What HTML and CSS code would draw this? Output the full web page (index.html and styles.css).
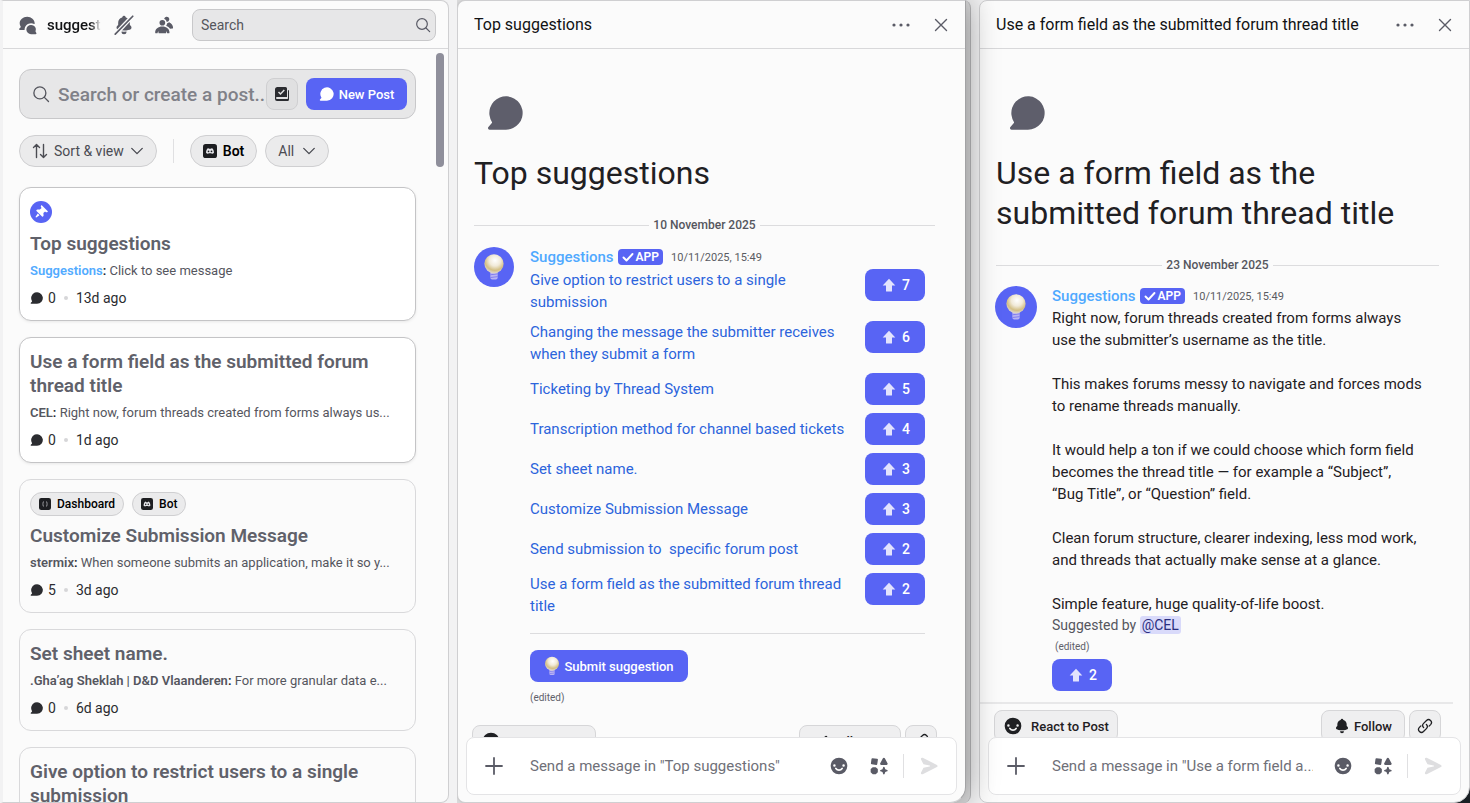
FILE: index.html
```
<!DOCTYPE html>
<html lang="en">
<head>
  <meta charset="UTF-8" />
  <meta name="viewport" content="width=device-width, initial-scale=1.0"/>
  <title>suggestions</title>
  <link rel="stylesheet" href="styles.css">
</head>
<body>

  <!-- Shared icons -->
  <svg class="sprite" aria-hidden="true">
    <defs>
      <radialGradient id="glass" cx="0.55" cy="0.32" r="0.65">
        <stop offset="0" stop-color="#ffffff"/>
        <stop offset="0.45" stop-color="#f1ead9"/>
        <stop offset="0.8" stop-color="#d3bf84"/>
        <stop offset="1" stop-color="#dcd3c9"/>
      </radialGradient>
      <symbol id="i-bubble" viewBox="0 0 24 24">
        <path d="M12 22a10 10 0 1 0-8.45-4.64c.13.19.11.44-.04.61l-2.06 2.37A1 1 0 0 0 2.2 22H12Z"/>
      </symbol>
      <symbol id="i-forum" viewBox="0 0 24 24">
        <path d="M18.91 12.98a5.45 5.45 0 0 1 2.18 6.2c-.1.33-.09.68.1.96l.83 1.32a1 1 0 0 1-.84 1.54h-5.5A5.6 5.6 0 0 1 10 17.5a5.6 5.6 0 0 1 5.68-5.5c1.2 0 2.32.36 3.23.98Z"/>
        <path d="M19.24 10.86c.32.16.72-.02.74-.38L20 10c0-4.42-4.03-8-9-8s-9 3.58-9 8c0 1.5.47 2.91 1.28 4.11.14.21.12.49-.06.67l-1.51 1.51A1 1 0 0 0 2.4 18h5.1a.5.5 0 0 0 .49-.5c0-4.2 3.5-7.5 7.68-7.5 1.28 0 2.5.3 3.56.86Z"/>
      </symbol>
      <symbol id="i-bell" viewBox="0 0 24 24">
        <path d="M9.7 2.89c.18-.07.32-.24.37-.43a2 2 0 0 1 3.86 0c.05.2.19.36.38.43A7 7 0 0 1 19 9.5v2.09c0 .12.05.24.13.33l1.1 1.22a3 3 0 0 1 .77 2.01v.28c0 .67-.34 1.29-.95 1.56-1.31.6-4 1.51-8.05 1.51-4.05 0-6.74-.91-8.05-1.5-.61-.28-.95-.9-.95-1.57v-.28a3 3 0 0 1 .77-2l1.1-1.23a.5.5 0 0 0 .13-.33V9.5a7 7 0 0 1 4.7-6.61ZM9.18 19.84A.16.16 0 0 0 9 20a3 3 0 1 0 6 0c0-.1-.09-.17-.18-.16a24.86 24.86 0 0 1-5.64 0Z"/>
      </symbol>
      <symbol id="i-people" viewBox="0 0 24 24">
        <circle cx="10" cy="9.300" r="3.400"/>
        <path d="M10 13.700c-5 0-8.600 3-8.600 7.300 0 .7.4 1 1.100 1h1.700l.8-2.700.6 2.700h8.800l.6-2.700.8 2.700h1.700c.7 0 1.100-.3 1.100-1 0-4.300-3.600-7.300-8.600-7.300Z"/>
        <path d="M12.600 3.600a3.100 3.100 0 1 1 4.700 3.900l-1.900.9a5.600 5.600 0 0 0-3.200-3.900Z"/>
        <path d="M15.600 10.200 18.200 8.700c2.700 1.300 4.600 3.500 4.700 6.500 0 .7-.4 1.100-1.100 1.100l-2.400.2a11 11 0 0 0-4.800-3.700c.6-.7.9-1.700 1-2.600Z"/>
      </symbol>
      <symbol id="i-search" viewBox="0 0 24 24">
        <g fill="none" stroke="currentColor" stroke-width="1.800" stroke-linecap="round">
          <circle cx="10.500" cy="10.500" r="8"/><path d="m16.500 16.500 5.500 5.500"/>
        </g>
      </symbol>
      <symbol id="i-chevron" viewBox="0 0 16 16">
        <path d="m2 5 6 6 6-6" fill="none" stroke="currentColor" stroke-width="1.600" stroke-linecap="round" stroke-linejoin="round"/>
      </symbol>
      <symbol id="i-close" viewBox="0 0 16 16">
        <path d="m2.500 2.500 11 11m0-11-11 11" fill="none" stroke="currentColor" stroke-width="1.400" stroke-linecap="round"/>
      </symbol>
      <symbol id="i-dots" viewBox="0 0 20 20">
        <circle cx="3" cy="10" r="1.600"/><circle cx="10" cy="10" r="1.600"/><circle cx="17" cy="10" r="1.600"/>
      </symbol>
      <symbol id="i-plus" viewBox="0 0 20 20">
        <path d="M10 2v16M2 10h16" fill="none" stroke="currentColor" stroke-width="1.800" stroke-linecap="round"/>
      </symbol>
      <symbol id="i-smile" viewBox="0 0 24 24">
        <path fill-rule="evenodd" d="M12 22a10 10 0 1 0 0-20 10 10 0 0 0 0 20ZM6.500 13a1.500 1.500 0 1 0 0-3 1.500 1.500 0 0 0 0 3Zm11 0a1.500 1.500 0 1 0 0-3 1.500 1.500 0 0 0 0 3Zm-9.800 1.170a1 1 0 0 1 1.390.27 3.500 3.500 0 0 0 5.820 0 1 1 0 0 1 1.660 1.120 5.500 5.500 0 0 1-9.140 0 1 1 0 0 1 .27-1.400Z"/>
      </symbol>
      <symbol id="i-apps" viewBox="0 0 24 24">
        <path d="M4.200 2.600 9.700 3.300a1.100 1.100 0 0 1 1 1.200l-.8 5.200a1.100 1.100 0 0 1-1.200 1l-5.400-.7a1.100 1.100 0 0 1-1-1.300l.7-5.100a1.100 1.100 0 0 1 1.200-1Z"/>
        <path d="M16.700 2.800a1.300 1.300 0 0 1 2.300 0l3.200 5.900a1.300 1.300 0 0 1-1.100 2h-6.500a1.300 1.300 0 0 1-1.100-2Z"/>
        <path d="M4.500 13.400h3.600l2.500 2.300v3.800L8.100 21.900H4.500L2 19.500v-3.800Z"/>
        <path d="M17 13.600c.3-.8 1.400-.8 1.700 0l.8 2.300 2.300.8c.8.3.8 1.400 0 1.700l-2.300.8-.8 2.300c-.3.8-1.400.8-1.700 0l-.8-2.300-2.300-.8c-.8-.3-.8-1.400 0-1.700l2.300-.8Z"/>
      </symbol>
      <symbol id="i-send" viewBox="0 0 24 24">
        <path d="M6.600 10.020 14 11.400a.6.6 0 0 1 0 1.180L6.600 14l-2.940 5.870a1.480 1.480 0 0 0 1.990 1.980l17.030-8.520a1.480 1.480 0 0 0 0-2.640L5.650 2.160a1.480 1.480 0 0 0-1.990 1.980l2.940 5.880Z"/>
      </symbol>
      <symbol id="i-bulb" viewBox="0 0 24 30">
        <path d="M8 21h8v5.500a2 2 0 0 1-2 2h-4a2 2 0 0 1-2-2Z" fill="#b9b4f4"/>
        <path d="m8 23.500 8-1m-8 4 8-1" stroke="#7d78ef" stroke-width="1"/>
        <circle cx="12" cy="11.500" r="10.500" fill="url(#glass)"/>
      </symbol>
      <symbol id="i-up" viewBox="0 0 14 14">
        <path d="M7 .8 13.300 7.400H10V13a.5.5 0 0 1-.5.5h-5A.5.5 0 0 1 4 13V7.400H.7Z"/>
      </symbol>
      <symbol id="i-face" viewBox="0 0 16 16">
        <rect width="16" height="16" rx="3" fill="#1d1e21"/>
        <path fill="#e6e6ea" fill-rule="evenodd" d="M6.400 4.800 5 5.200c-1 1.400-1.600 3.300-1.500 5.200.8.6 1.600.9 2.300 1l.5-.9h3.400l.5.9c.7-.1 1.500-.4 2.300-1 .1-1.900-.5-3.800-1.500-5.200l-1.400-.4-.4.700H6.800ZM6.300 7.300a1 1.100 0 1 0 0 2.200 1 1.100 0 0 0 0-2.200Zm3.400 0a1 1.100 0 1 0 0 2.200 1 1.100 0 0 0 0-2.200Z"/>
      </symbol>
      <symbol id="i-braces" viewBox="0 0 16 16">
        <rect width="16" height="16" rx="3" fill="#1d1e21"/>
        <path d="M6.600 4.800c-2 0-.4 2.700-2 3.200 1.600.5 0 3.200 2 3.200m2.800-6.400c2 0 .4 2.700 2 3.200-1.600.5 0 3.200-2 3.200" fill="none" stroke="#c4c4c8" stroke-width="1"/>
      </symbol>
      <symbol id="i-link" viewBox="0 0 16 16">
        <g fill="none" stroke="currentColor" stroke-width="1.300" stroke-linecap="round">
          <path d="M6.600 9.500a2.900 2.900 0 0 1 0-4.100l2.900-2.900a2.900 2.900 0 0 1 4.100 4.100l-1.500 1.500"/>
          <path d="M9.400 6.500a2.900 2.900 0 0 1 0 4.100l-2.900 2.900a2.900 2.900 0 0 1-4.100-4.100l1.500-1.500"/>
        </g>
      </symbol>
      <symbol id="i-check" viewBox="0 0 12 12">
        <path d="m1.500 6.500 3 3 6-6.500" fill="none" stroke="currentColor" stroke-width="1.900" stroke-linecap="round" stroke-linejoin="round"/>
      </symbol>
    </defs>
  </svg>

  <main class="app">

    <!-- Forum list -->
    <section class="pane forum">
      <header class="pane-header forum-header">
        <svg class="icon s20"><use href="#i-forum"/></svg>
        <h1 class="channel">suggest</h1>
        <button class="icon-btn" aria-label="Muted">
          <svg class="icon s20" viewBox="0 0 24 24">
            <use href="#i-bell"/>
            <path d="M1.500 23.500 22.500 1" stroke="#fbfbfb" stroke-width="5"/>
            <path d="M1.500 23 22.500 1.500" stroke="currentColor" stroke-width="2" stroke-linecap="round"/>
          </svg>
        </button>
        <button class="icon-btn" aria-label="Members"><svg class="icon s20"><use href="#i-people"/></svg></button>
        <label class="search">
          <input type="text" placeholder="Search" aria-label="Search">
          <svg class="icon s16"><use href="#i-search"/></svg>
        </label>
      </header>

      <div class="forum-body">
        <div class="posts">
          <div class="post-search">
            <svg class="icon s18"><use href="#i-search"/></svg>
            <input type="text" placeholder="Search or create a post..." aria-label="Search or create a post">
            <button class="guide-btn" aria-label="Post guidelines">
              <svg class="icon s16" viewBox="0 0 16 16">
                <path fill-rule="evenodd" d="M3.500 1h8A1.500 1.500 0 0 1 13 2.500v8a.5.5 0 0 1-.5.5H3a1 1 0 0 0 0 2h10.300a.7.7 0 0 0 .7-.7V4a1 1 0 0 1 1 1v8.500a1.500 1.500 0 0 1-1.500 1.500H3a2 2 0 0 1-2-2V3.500A2.500 2.500 0 0 1 3.500 1Z"/>
                <path d="m4.500 6 2 2 3.800-4" fill="none" stroke="#e0e0e1" stroke-width="1.500"/>
              </svg>
            </button>
            <button class="btn new-post"><svg class="icon s16"><use href="#i-bubble"/></svg>New Post</button>
          </div>

          <div class="filters">
            <button class="pill">
              <svg class="icon s16" viewBox="0 0 16 16"><path d="M4.500 14.500v-13M1.500 4.500l3-3 3 3M11.500 1.500v13M8.500 11.500l3 3 3-3" fill="none" stroke="currentColor" stroke-width="1.400" stroke-linecap="round" stroke-linejoin="round"/></svg>
              Sort &amp; view
              <svg class="icon s14"><use href="#i-chevron"/></svg>
            </button>
            <span class="sep"></span>
            <button class="pill pill-tag"><svg class="icon s14"><use href="#i-face"/></svg>Bot</button>
            <button class="pill pill-all">All <svg class="icon s14"><use href="#i-chevron"/></svg></button>
          </div>

          <article class="card unread">
            <div class="card-top">
              <span class="pin"><svg class="icon s14" viewBox="0 0 24 24"><path d="M19.380 11.380a3 3 0 0 0 4.240 0l.03-.03a.5.5 0 0 0 0-.7L13.350.35a.5.5 0 0 0-.7 0l-.03.03a3 3 0 0 0 0 4.240L13 5l-2.920 2.920-3.650-.34a2 2 0 0 0-1.600.58l-.62.63a1 1 0 0 0 0 1.420l9.580 9.580a1 1 0 0 0 1.420 0l.63-.63a2 2 0 0 0 .58-1.600l-.34-3.640L19 11l.38.38ZM9.070 17.070a.5.5 0 0 1-.08.77l-5.150 3.430a.5.5 0 0 1-.63-.06l-.42-.42a.5.5 0 0 1-.06-.63L6.160 15a.5.5 0 0 1 .77-.08l2.140 2.140Z"/></svg></span>
            </div>
            <h2>Top suggestions</h2>
            <p class="preview"><b class="bot-name">Suggestions</b><i>:</i> Click to see message</p>
            <p class="meta"><svg class="icon s14"><use href="#i-bubble"/></svg>0<span class="dot"></span>13d ago</p>
          </article>

          <article class="card unread">
            <h2>Use a form field as the submitted forum thread title</h2>
            <p class="preview"><b>CEL</b><i>:</i> Right now, forum threads created from forms always us...</p>
            <p class="meta"><svg class="icon s14"><use href="#i-bubble"/></svg>0<span class="dot"></span>1d ago</p>
          </article>

          <article class="card">
            <div class="card-top">
              <span class="tag"><svg class="icon s12"><use href="#i-braces"/></svg>Dashboard</span>
              <span class="tag"><svg class="icon s12"><use href="#i-face"/></svg>Bot</span>
            </div>
            <h2>Customize Submission Message</h2>
            <p class="preview"><b>stermix</b><i>:</i> When someone submits an application, make it so y...</p>
            <p class="meta"><svg class="icon s14"><use href="#i-bubble"/></svg>5<span class="dot"></span>3d ago</p>
          </article>

          <article class="card">
            <h2>Set sheet name.</h2>
            <p class="preview"><b>.Gha’ag Sheklah | D&amp;D Vlaanderen</b><i>:</i> For more granular data e...</p>
            <p class="meta"><svg class="icon s14"><use href="#i-bubble"/></svg>0<span class="dot"></span>6d ago</p>
          </article>

          <article class="card">
            <h2>Give option to restrict users to a single submission</h2>
          </article>
        </div>
        <div class="scrollbar"></div>
      </div>
    </section>

    <!-- Top suggestions thread -->
    <div class="stack">
      <section class="pane thread thread-top">
        <header class="pane-header">
          <h2 class="thread-name">Top suggestions</h2>
          <button class="icon-btn" aria-label="More"><svg class="icon s20"><use href="#i-dots"/></svg></button>
          <button class="icon-btn" aria-label="Close"><svg class="icon s16"><use href="#i-close"/></svg></button>
        </header>
        <div class="thread-body">
          <svg class="icon big-bubble"><use href="#i-bubble"/></svg>
          <h1 class="thread-title">Top suggestions</h1>
          <div class="date"><span>10 November 2025</span></div>
          <div class="message">
            <div class="avatar"><svg class="bulb"><use href="#i-bulb"/></svg></div>
            <div class="content">
              <div class="byline"><span class="name">Suggestions</span><span class="badge"><svg class="icon s12"><use href="#i-check"/></svg>APP</span><time>10/11/2025, 15:49</time></div>
              <div class="rows">
                <div class="row"><a href="#">Give option to restrict users to a single submission</a><button class="btn vote"><svg class="icon s14"><use href="#i-up"/></svg>7</button></div>
                <div class="row"><a href="#">Changing the message the submitter receives when they submit a form</a><button class="btn vote"><svg class="icon s14"><use href="#i-up"/></svg>6</button></div>
                <div class="row"><a href="#">Ticketing by Thread System</a><button class="btn vote"><svg class="icon s14"><use href="#i-up"/></svg>5</button></div>
                <div class="row"><a href="#">Transcription method for channel based tickets</a><button class="btn vote"><svg class="icon s14"><use href="#i-up"/></svg>4</button></div>
                <div class="row"><a href="#">Set sheet name.</a><button class="btn vote"><svg class="icon s14"><use href="#i-up"/></svg>3</button></div>
                <div class="row"><a href="#">Customize Submission Message</a><button class="btn vote"><svg class="icon s14"><use href="#i-up"/></svg>3</button></div>
                <div class="row"><a href="#">Send submission to&nbsp; specific forum post</a><button class="btn vote"><svg class="icon s14"><use href="#i-up"/></svg>2</button></div>
                <div class="row"><a href="#">Use a form field as the submitted forum thread title</a><button class="btn vote"><svg class="icon s14"><use href="#i-up"/></svg>2</button></div>
              </div>
              <hr>
              <button class="btn submit"><svg class="mini-bulb"><use href="#i-bulb"/></svg>Submit suggestion</button>
              <p class="edited">(edited)</p>
            </div>
          </div>
          <div class="actions">
            <button class="action react"><svg class="icon s20"><use href="#i-smile"/></svg>React to Post</button>
            <button class="action"><svg class="icon s16"><use href="#i-check"/></svg>Following</button>
            <button class="action copy" aria-label="Copy link"><svg class="icon s16"><use href="#i-link"/></svg></button>
          </div>
        </div>
        <div class="composer">
          <button class="icon-btn" aria-label="Attach"><svg class="icon s20"><use href="#i-plus"/></svg></button>
          <input type="text" placeholder='Send a message in "Top suggestions"' aria-label="Message">
          <button class="icon-btn" aria-label="Emoji"><svg class="icon s20"><use href="#i-smile"/></svg></button>
          <button class="icon-btn" aria-label="Apps"><svg class="icon s20"><use href="#i-apps"/></svg></button>
          <span class="sep"></span>
          <button class="icon-btn send" aria-label="Send"><svg class="icon s20"><use href="#i-send"/></svg></button>
        </div>
      </section>
    </div>

    <!-- Single suggestion thread -->
    <div class="corner">
      <section class="pane thread thread-side">
        <header class="pane-header">
          <h2 class="thread-name">Use a form field as the submitted forum thread title</h2>
          <button class="icon-btn" aria-label="More"><svg class="icon s20"><use href="#i-dots"/></svg></button>
          <button class="icon-btn" aria-label="Close"><svg class="icon s16"><use href="#i-close"/></svg></button>
        </header>
        <div class="thread-body">
          <svg class="icon big-bubble"><use href="#i-bubble"/></svg>
          <h1 class="thread-title">Use a form field as the submitted forum thread title</h1>
          <div class="date"><span>23 November 2025</span></div>
          <div class="message">
            <div class="avatar"><svg class="bulb"><use href="#i-bulb"/></svg></div>
            <div class="content">
              <div class="byline"><span class="name">Suggestions</span><span class="badge"><svg class="icon s12"><use href="#i-check"/></svg>APP</span><time>10/11/2025, 15:49</time></div>
              <div class="text">
                <p>Right now, forum threads created from forms always use the submitter’s username as the title.</p>
                <p>This makes forums messy to navigate and forces mods to rename threads manually.</p>
                <p>It would help a ton if we could choose which form field becomes the thread title — for example a “Subject”, “Bug&nbsp;Title”, or “Question” field.</p>
                <p>Clean forum structure, clearer indexing, less mod work, and threads that actually make sense at a glance.</p>
                <p>Simple feature, huge quality-of-life boost.</p>
              </div>
              <p class="suggested">Suggested by <a class="mention" href="#">@CEL</a></p>
              <p class="edited">(edited)</p>
              <button class="btn vote"><svg class="icon s14"><use href="#i-up"/></svg>2</button>
            </div>
          </div>
          <div class="actions">
            <button class="action react"><svg class="icon s20"><use href="#i-smile"/></svg>React to Post</button>
            <button class="action"><svg class="icon s16"><use href="#i-bell"/></svg>Follow</button>
            <button class="action copy" aria-label="Copy link"><svg class="icon s16"><use href="#i-link"/></svg></button>
          </div>
        </div>
        <div class="composer">
          <button class="icon-btn" aria-label="Attach"><svg class="icon s20"><use href="#i-plus"/></svg></button>
          <input type="text" placeholder='Send a message in "Use a form field a...' aria-label="Message">
          <button class="icon-btn" aria-label="Emoji"><svg class="icon s20"><use href="#i-smile"/></svg></button>
          <button class="icon-btn" aria-label="Apps"><svg class="icon s20"><use href="#i-apps"/></svg></button>
          <span class="sep"></span>
          <button class="icon-btn send" aria-label="Send"><svg class="icon s20"><use href="#i-send"/></svg></button>
        </div>
      </section>
    </div>

  </main>

</body>
</html>
```
FILE: styles.css
```
* {
  box-sizing: border-box;
  margin: 0;
  padding: 0;
}

body {
  font-family: Roboto, "Noto Sans", "Liberation Sans", sans-serif;
  font-size: 15px;
  background: #f2f2f3;
  color: #1f2023;
}

button,
input {
  font: inherit;
  color: inherit;
  background: none;
  border: none;
  outline: none;
}

button {
  cursor: pointer;
}

a {
  color: #2c64dc;
  text-decoration: none;
}

.sprite {
  position: absolute;
  width: 0;
  height: 0;
}

.icon {
  display: block;
  flex: none;
  fill: currentColor;
}

.s12 { width: 12px; height: 12px; }
.s14 { width: 14px; height: 14px; }
.s16 { width: 16px; height: 16px; }
.s18 { width: 18px; height: 18px; }
.s20 { width: 20px; height: 20px; }

.app {
  display: grid;
  grid-template-columns: 449fr 514fr 491fr;
  gap: 8px;
  height: 100vh;
  overflow: hidden;
}

.pane {
  display: flex;
  flex-direction: column;
  min-width: 0;
  height: 100vh;
  overflow: hidden;
  background: #fbfbfb;
  border: 1px solid #cfcfd1;
  border-radius: 8px;
}

.pane-header {
  display: flex;
  align-items: center;
  flex: none;
  height: 48px;
  padding: 0 16px;
  border-bottom: 1px solid #d8d8da;
}

.icon-btn {
  display: flex;
  align-items: center;
  justify-content: center;
  flex: none;
  color: #5a5b66;
}

/* Forum list */
.forum {
  border-left: 3px solid #f2f2f3;
  border-radius: 0 8px 8px 0;
}

.forum-header {
  gap: 20px;
  padding: 0 12px 0 15px;
  color: #5a5b66;
}

.channel {
  flex: none;
  width: 54px;
  margin: 0 -7px 0 -11px;
  white-space: nowrap;
  font-size: 15px;
  font-weight: 500;
  color: #111214;
  mask-image: linear-gradient(to right, #000 80%, transparent);
}

.search {
  display: flex;
  align-items: center;
  flex: 1;
  min-width: 0;
  height: 32px;
  margin-left: -2px;
  padding: 0 4px 0 8px;
  background: #e7e7e8;
  border: 1px solid #c8c8ca;
  border-radius: 8px;
  font-size: 14px;
}

.search input {
  flex: 1;
  min-width: 0;
}

.search input::placeholder {
  color: #55565c;
}

.forum-body {
  display: flex;
  flex: 1;
  min-height: 0;
  padding: 0 4px 0 16px;
  overflow: hidden;
}

.posts {
  flex: 1;
  min-width: 0;
  padding-top: 20px;
}

.scrollbar {
  width: 8px;
  height: 114px;
  margin: 4px 0 0 20px;
  background: #8f8f9b;
  border-radius: 4px;
}

.post-search {
  display: flex;
  align-items: center;
  height: 50px;
  padding: 0 8px 0 12px;
  background: #e7e7e8;
  border: 1px solid #c8c8ca;
  border-radius: 12px;
  color: #55565e;
}

.post-search input {
  flex: 1;
  min-width: 0;
  margin-left: 8px;
  font-size: 19px;
  font-weight: 500;
}

.post-search input::placeholder {
  color: #808188;
}

.guide-btn {
  display: flex;
  align-items: center;
  justify-content: center;
  width: 32px;
  height: 32px;
  margin-right: 8px;
  background: #e0e0e1;
  border: 1px solid #cfcfd1;
  border-radius: 8px;
  color: #2b2c30;
}

.btn {
  display: flex;
  align-items: center;
  justify-content: center;
  gap: 4px;
  height: 32px;
  background: #5864f4;
  border-radius: 8px;
  color: #ffffff;
  font-size: 13px;
  font-weight: 500;
  white-space: nowrap;
}

.new-post {
  width: 101px;
}

.filters {
  display: flex;
  align-items: center;
  gap: 8px;
  margin: 16px 0 20px;
}

.pill {
  display: flex;
  align-items: center;
  gap: 6px;
  height: 32px;
  padding: 0 12px;
  background: #ebebec;
  border: 1px solid #cfcfd1;
  border-radius: 16px;
  color: #4b4c53;
  font-size: 14px;
  white-space: nowrap;
}

.pill-tag {
  color: #000000;
  font-weight: 600;
}

.pill-all {
  gap: 8px;
}

.sep {
  width: 1px;
  height: 24px;
  margin: 0 8px;
  background: #e0e0e2;
}

.card {
  margin-bottom: 16px;
  padding: 12px 10px;
  border: 1px solid #d9d9db;
  border-radius: 12px;
}

.card.unread {
  background: #ffffff;
  border-color: #c4c4c6;
  box-shadow: 0 1px 3px rgba(0, 0, 0, 0.08);
}

.card-top {
  display: flex;
  align-items: center;
  gap: 8px;
  height: 24px;
  margin-bottom: 8px;
}

.pin {
  display: flex;
  align-items: center;
  justify-content: center;
  width: 22px;
  height: 22px;
  background: #5864f4;
  border-radius: 50%;
  color: #ffffff;
}

.tag {
  display: flex;
  align-items: center;
  gap: 6px;
  height: 24px;
  padding: 0 8px;
  background: #ebebec;
  border: 1px solid #cfcfd1;
  border-radius: 12px;
  color: #000000;
  font-size: 12px;
  font-weight: 500;
}

.card h2 {
  font-size: 19px;
  font-weight: 600;
  line-height: 24px;
  color: #60616a;
}

.preview {
  margin-top: 5px;
  overflow: hidden;
  white-space: nowrap;
  text-overflow: ellipsis;
  font-size: 13px;
  line-height: 20px;
  color: #55565e;
}

.preview b {
  font-weight: 600;
}

.preview i {
  font-style: normal;
  font-weight: 600;
  color: #222327;
}

.preview .bot-name {
  color: #52abff;
}

.meta {
  display: flex;
  align-items: center;
  gap: 4px;
  margin-top: 7px;
  font-size: 14px;
  line-height: 20px;
  color: #2b2c30;
}

.dot {
  width: 4px;
  height: 4px;
  margin: 0 4px;
  background: #d6d6d8;
  border-radius: 50%;
}

/* Threads */
.stack {
  min-width: 0;
  padding-right: 4px;
  background: #dcdcdd;
  border-right: 1px solid #b9b9bb;
  border-radius: 8px;
}

.thread-top {
  position: relative;
  z-index: 1;
  border-right-color: #a2a2a4;
  border-radius: 8px 0 16px 8px;
  box-shadow: 0 0 32px rgba(0, 0, 0, 0.4);
  clip-path: inset(0 -40px 0 0);
}

.corner {
  min-width: 0;
  background: linear-gradient(135deg, #f2f2f3 calc(100% - 16px), #1a2024 0);
}

.thread-side {
  border-radius: 8px 0 16px 8px;
}

.thread-name {
  flex: 1;
  min-width: 0;
  overflow: hidden;
  white-space: nowrap;
  font-size: 16px;
  font-weight: 400;
  color: #111214;
}

.thread .pane-header .icon-btn + .icon-btn {
  margin-left: 22px;
}

.thread-body {
  flex: 1;
  min-height: 0;
  overflow: hidden;
}

.big-bubble {
  width: 40px;
  height: 40px;
  margin: 44px 0 0 28px;
  color: #5e5e6b;
}

.thread-title {
  margin: 20px 32px 0 16px;
  font-size: 32px;
  font-weight: 400;
  line-height: 40px;
}

.date {
  display: flex;
  align-items: center;
  gap: 4px;
  height: 16px;
  margin: 24px 30px 0 16px;
  font-size: 12px;
  font-weight: 500;
  color: #55565e;
}

.date::before,
.date::after {
  content: "";
  flex: 1;
  height: 1px;
  background: #dcdcde;
}

.message {
  display: flex;
  gap: 16px;
  margin: 12px 40px 0 16px;
}

.avatar {
  display: flex;
  align-items: center;
  justify-content: center;
  flex: none;
  width: 40px;
  height: 40px;
  margin-top: 2px;
  background: #5864f4;
  border-radius: 50%;
}

.bulb {
  width: 22px;
  height: 28px;
}

.content {
  flex: 1;
  min-width: 0;
}

.byline {
  display: flex;
  align-items: center;
  height: 24px;
}

.name {
  color: #4fa9ff;
  font-weight: 500;
}

.badge {
  display: flex;
  align-items: center;
  gap: 2px;
  height: 16px;
  margin: 0 8px 0 4px;
  padding: 0 4px;
  background: #5864f4;
  border-radius: 4px;
  color: #ffffff;
  font-size: 12px;
  font-weight: 600;
}

.byline time {
  font-size: 11px;
  color: #5a5b62;
}

.rows {
  display: grid;
  gap: 8px;
}

.row {
  display: flex;
  justify-content: space-between;
  gap: 12px;
  min-height: 32px;
}

.row a {
  align-self: center;
  line-height: 22px;
}

.vote {
  flex: none;
  width: 60px;
  gap: 6px;
  padding-left: 2px;
  font-size: 14px;
}

.vote .icon {
  color: #e3e3fd;
}

hr {
  height: 1px;
  margin: 16px 0;
  background: #dcdcde;
  border: none;
}

.submit {
  width: 158px;
}

.mini-bulb {
  width: 16px;
  height: 20px;
}

.edited {
  margin-top: 8px;
  font-size: 10px;
  line-height: 16px;
  color: #60616a;
}

.actions {
  display: flex;
  gap: 4px;
  margin: 19px 28px 0 14px;
}

.action {
  display: flex;
  align-items: center;
  gap: 4px;
  height: 32px;
  padding: 0 12px;
  background: #efeff0;
  border: 1px solid #d6d6d8;
  border-radius: 8px;
  color: #1f2023;
  font-size: 13px;
  font-weight: 500;
}

.react {
  gap: 8px;
  margin-right: auto;
  padding: 0 8px;
}

.copy {
  padding: 0 7px;
}

/* Suggestion text */
.thread-side .avatar {
  width: 42px;
  height: 42px;
}

.thread-side .message {
  gap: 15px;
  margin: 11px 29px 0 15px;
}

.text {
  display: grid;
  gap: 22px;
  margin-top: -1px;
  padding-right: 12px;
  line-height: 22px;
}

.suggested {
  font-size: 14px;
  line-height: 20px;
  color: #55565e;
}

.mention {
  padding: 1px 2px;
  background: #d9dafa;
  border-radius: 3px;
  color: #2b2f80;
}

.thread-side .edited {
  margin: 4px 0 4px 3px;
}

.thread-side .actions {
  margin: 11px 16px 0 0;
  padding: 6px 12px 0 14px;
  border-top: 2px solid #e8e8e9;
}

.composer {
  display: flex;
  align-items: center;
  flex: none;
  gap: 20px;
  height: 58px;
  margin: 0 8px 7px;
  padding: 0 18px 0 17px;
  background: #ffffff;
  border: 1px solid #e4e4e6;
  border-radius: 8px;
}

.composer input {
  flex: 1;
  min-width: 0;
  margin-left: 6px;
}

.composer input::placeholder {
  color: #6f7078;
}

.composer .sep {
  margin: 0 -6px 0 -6px;
}

.composer .send {
  color: #dedee0;
}
```
